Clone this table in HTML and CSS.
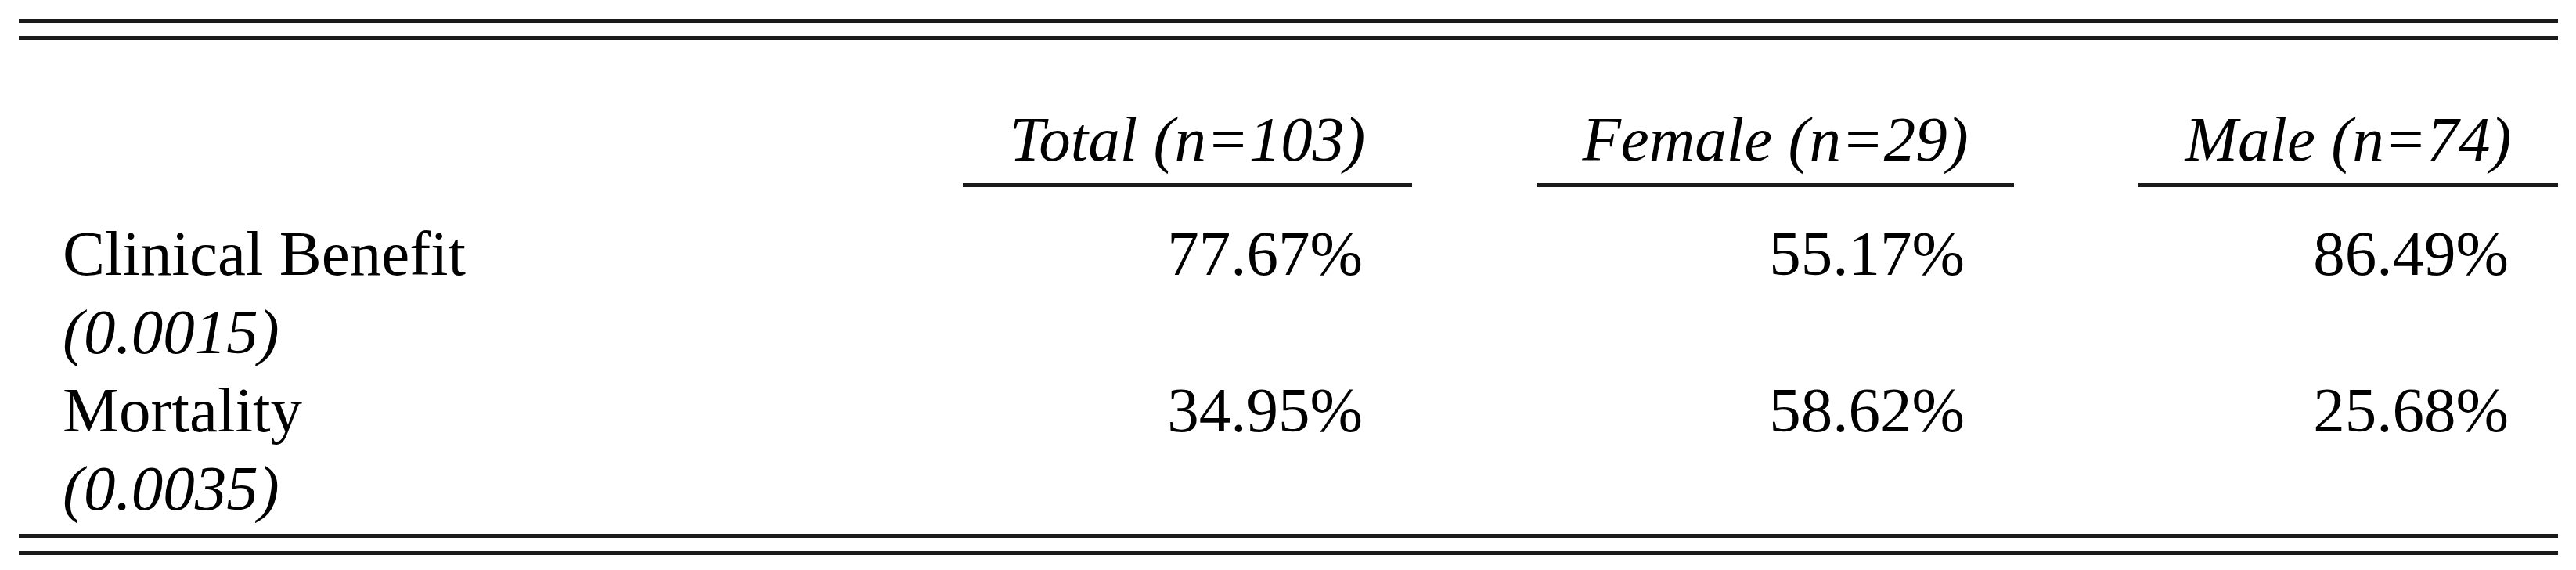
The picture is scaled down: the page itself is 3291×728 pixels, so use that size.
FILE: index.html
```html
<!DOCTYPE html>
<html lang="en">
<head>
<meta charset="utf-8">
<title>Clinical outcomes by sex</title>
<link rel="stylesheet" href="styles.css">
</head>
<body>
<div class="table">
  <div class="rule rule-first"></div>
  <div class="rule rule-second"></div>

  <div class="row head">
    <div class="cell label"></div>
    <div class="cell colhead">Total (n=103)</div>
    <div class="cell colhead">Female (n=29)</div>
    <div class="cell colhead">Male (n=74)</div>
  </div>

  <div class="row body-first">
    <div class="cell label">
      <div class="name">Clinical Benefit</div>
      <div class="pval">(0.0015)</div>
    </div>
    <div class="cell num">77.67%</div>
    <div class="cell num">55.17%</div>
    <div class="cell num">86.49%</div>
  </div>

  <div class="row">
    <div class="cell label">
      <div class="name">Mortality</div>
      <div class="pval">(0.0035)</div>
    </div>
    <div class="cell num">34.95%</div>
    <div class="cell num">58.62%</div>
    <div class="cell num">25.68%</div>
  </div>

  <div class="rule rule-bottom-first"></div>
  <div class="rule rule-second"></div>
</div>
</body>
</html>
```

FILE: styles.css
```css
html, body {
  margin: 0;
  padding: 0;
  background: #ffffff;
}

body {
  font-family: "Liberation Serif", "Times New Roman", serif;
  font-size: 81px;
  line-height: 100px;
  color: #000000;
}

.table {
  margin: 0 23px 0 24px;
  padding-top: 24px;
  display: flex;
  flex-direction: column;
}

.rule {
  height: 5px;
  background: #1a1a1a;
}

.rule-second {
  margin-top: 17px;
}

.rule-bottom-first {
  margin-top: 8px;
}

.row {
  display: grid;
  grid-template-columns: 1fr 574px 610px 536px;
  column-gap: 159px;
}

.head {
  margin-top: 77px;
  margin-bottom: 35px;
}

.colhead {
  font-style: italic;
  text-align: center;
  padding-bottom: 6px;
  border-bottom: 5px solid #1a1a1a;
  white-space: nowrap;
}

.label {
  padding-left: 56px;
}

.pval {
  font-style: italic;
}

.num {
  text-align: right;
  padding-right: 63px;
  white-space: nowrap;
}
```
